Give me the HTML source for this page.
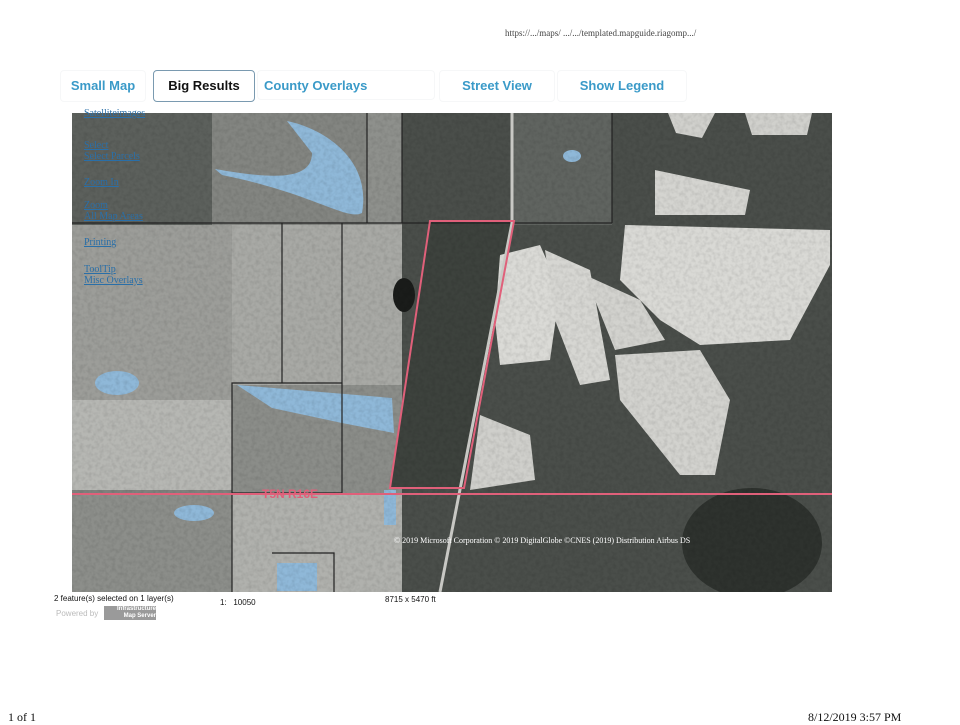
<!DOCTYPE html>
<html><head><meta charset="utf-8"><style>
body{margin:0;width:960px;height:720px;background:#fff;position:relative;overflow:hidden;font-family:"Liberation Sans",Arial,sans-serif}
.tab{position:absolute;top:70px;height:30px;line-height:30px;font-size:13px;font-weight:bold;color:#3a9ac8;text-align:center;border:1px solid #f6f7f8;border-radius:4px}
.t{position:absolute;font-size:8px;color:#111}
.lk{position:absolute;left:84px;font-family:"Liberation Serif",serif;font-size:10px;color:#2a6fa8;text-decoration:underline}
</style></head><body>
<div class="t" style="left:505px;top:28px;font-size:9px;color:#444;font-family:'Liberation Serif',serif">https://.../maps/ .../.../templated.mapguide.riagomp.../</div>
<div class="tab" style="left:60px;width:84px">Small Map</div>
<div class="tab" style="left:153px;width:100px;color:#111;border:1px solid #7a9ab0">Big Results</div>
<div class="tab" style="left:257px;width:178px;text-align:left;padding-left:6px;box-sizing:border-box">County Overlays</div>
<div class="tab" style="left:439px;width:114px">Street View</div>
<div class="tab" style="left:557px;width:128px">Show Legend</div>
<svg style="position:absolute;left:72px;top:113px" width="760" height="479" viewBox="0 0 760 479">
<defs><filter id="n"><feTurbulence type="fractalNoise" baseFrequency="0.25" numOctaves="2" seed="3"/><feColorMatrix type="matrix" values="0 0 0 0 0  0 0 0 0 0  0 0 0 0 0  0 0 0 -1.2 0.75"/></filter></defs>
<rect width="760" height="479" fill="#7f817d"/>
<rect x="0" y="0" width="140" height="112" fill="#5c605c"/>
<rect x="140" y="0" width="155" height="112" fill="#838581"/>
<rect x="295" y="0" width="145" height="112" fill="#8e908c"/>
<rect x="0" y="112" width="160" height="175" fill="#9c9d99"/>
<rect x="160" y="112" width="170" height="160" fill="#a8a9a5"/>
<rect x="0" y="287" width="160" height="90" fill="#b6b7b3"/>
<rect x="160" y="272" width="170" height="108" fill="#8b8d89"/>
<rect x="0" y="380" width="160" height="99" fill="#8c8e8a"/>
<rect x="160" y="380" width="170" height="99" fill="#b0b1ad"/>
<rect x="330" y="0" width="430" height="479" fill="#4a4e4a"/>
<rect x="440" y="0" width="100" height="112" fill="#606460"/>
<polygon points="358,108 442,108 392,375 318,375" fill="#3d423d"/>
<polygon points="553,112 758,117 758,152 718,227 628,232 588,207 548,167" fill="#d9d9d5"/>
<polygon points="583,57 678,77 673,102 583,102" fill="#d4d4d0"/>
<polygon points="428,142 468,132 488,177 478,247 428,252 423,207" fill="#dadad6"/>
<polygon points="473,137 518,157 538,267 508,272 483,207" fill="#d6d6d2"/>
<polygon points="513,162 568,187 593,227 543,237" fill="#d2d2ce"/>
<polygon points="543,242 628,237 658,287 643,362 608,362 548,287" fill="#d2d2ce"/>
<polygon points="408,302 458,322 463,367 398,377" fill="#cfcfcb"/>
<polygon points="596,0 643,0 630,25 604,20" fill="#d0d0cc"/>
<polygon points="673,0 740,0 735,22 680,22" fill="#d0d0cc"/>
<ellipse cx="680" cy="430" rx="70" ry="55" fill="#2e322e"/>
<path d="M215,8 C250,15 300,45 290,100 C275,108 240,80 150,62 L143,56 C200,66 240,68 240,40 Z" fill="#8fb8d8"/>
<path d="M165,272 L320,285 L322,320 L270,310 L200,295 Z" fill="#8fb8d8"/>
<ellipse cx="45" cy="270" rx="22" ry="12" fill="#8fb8d8"/>
<ellipse cx="332" cy="182" rx="11" ry="17" fill="#1a1c1a"/>
<ellipse cx="500" cy="43" rx="9" ry="6" fill="#8fb8d8"/>
<rect x="205" y="450" width="40" height="28" fill="#8fb8d8"/>
<ellipse cx="122" cy="400" rx="20" ry="8" fill="#8fb8d8"/>
<rect x="312" y="377" width="12" height="35" fill="#8fb8d8"/>
<rect width="760" height="479" filter="url(#n)" opacity="0.15"/>
<g stroke="#222" stroke-width="1.2" fill="none">
<path d="M0,110 H540 M295,0 V110 M440,0 V110 M540,0 V110 M160,270 H270 V380 H160 Z M210,110 V270 M270,110 V380 M160,380 V479 M200,440 H262 V479 M330,0 V110"/>
</g>
<path d="M440,0 V110 L368,479" stroke="#c8c8c4" stroke-width="3" fill="none"/>
<g stroke="#e0607a" stroke-width="2" fill="none">
<path d="M358,108 L442,108 L392,375 L318,375 Z"/>
<path d="M0,381 H760"/>
</g>
<text x="190" y="385" font-size="12" fill="#e0607a" font-weight="bold">T5N R16E</text>
<text x="322" y="430" font-size="8" fill="#fff" font-family="Liberation Serif">© 2019 Microsoft Corporation © 2019 DigitalGlobe ©CNES (2019) Distribution Airbus DS</text>
</svg>
<div class="lk" style="top:108px">Satelliteimages</div>
<div class="lk" style="top:140px">Select<br>Select Parcels</div>
<div class="lk" style="top:177px">Zoom In</div>
<div class="lk" style="top:200px">Zoom<br>All Map Areas</div>
<div class="lk" style="top:237px">Printing</div>
<div class="lk" style="top:264px">ToolTip<br>Misc Overlays</div>
<div class="t" style="left:54px;top:594px">2 feature(s) selected on 1 layer(s)</div>
<div class="t" style="left:220px;top:598px">1:&nbsp;&nbsp; 10050</div>
<div class="t" style="left:385px;top:595px">8715 x 5470 ft</div>
<div class="t" style="left:56px;top:609px;color:#bbb">Powered by</div>
<div style="position:absolute;left:104px;top:606px;width:52px;height:14px;background:#9a9a9a;color:#fff;font-size:6px;font-weight:bold;line-height:7px;text-align:right">Infrastructure<br>Map Server</div>
<div class="t" style="left:8px;top:710px;font-family:'Liberation Serif',serif;font-size:12px">1 of 1</div>
<div class="t" style="left:808px;top:710px;font-family:'Liberation Serif',serif;font-size:12px">8/12/2019 3:57 PM</div>
</body></html>
